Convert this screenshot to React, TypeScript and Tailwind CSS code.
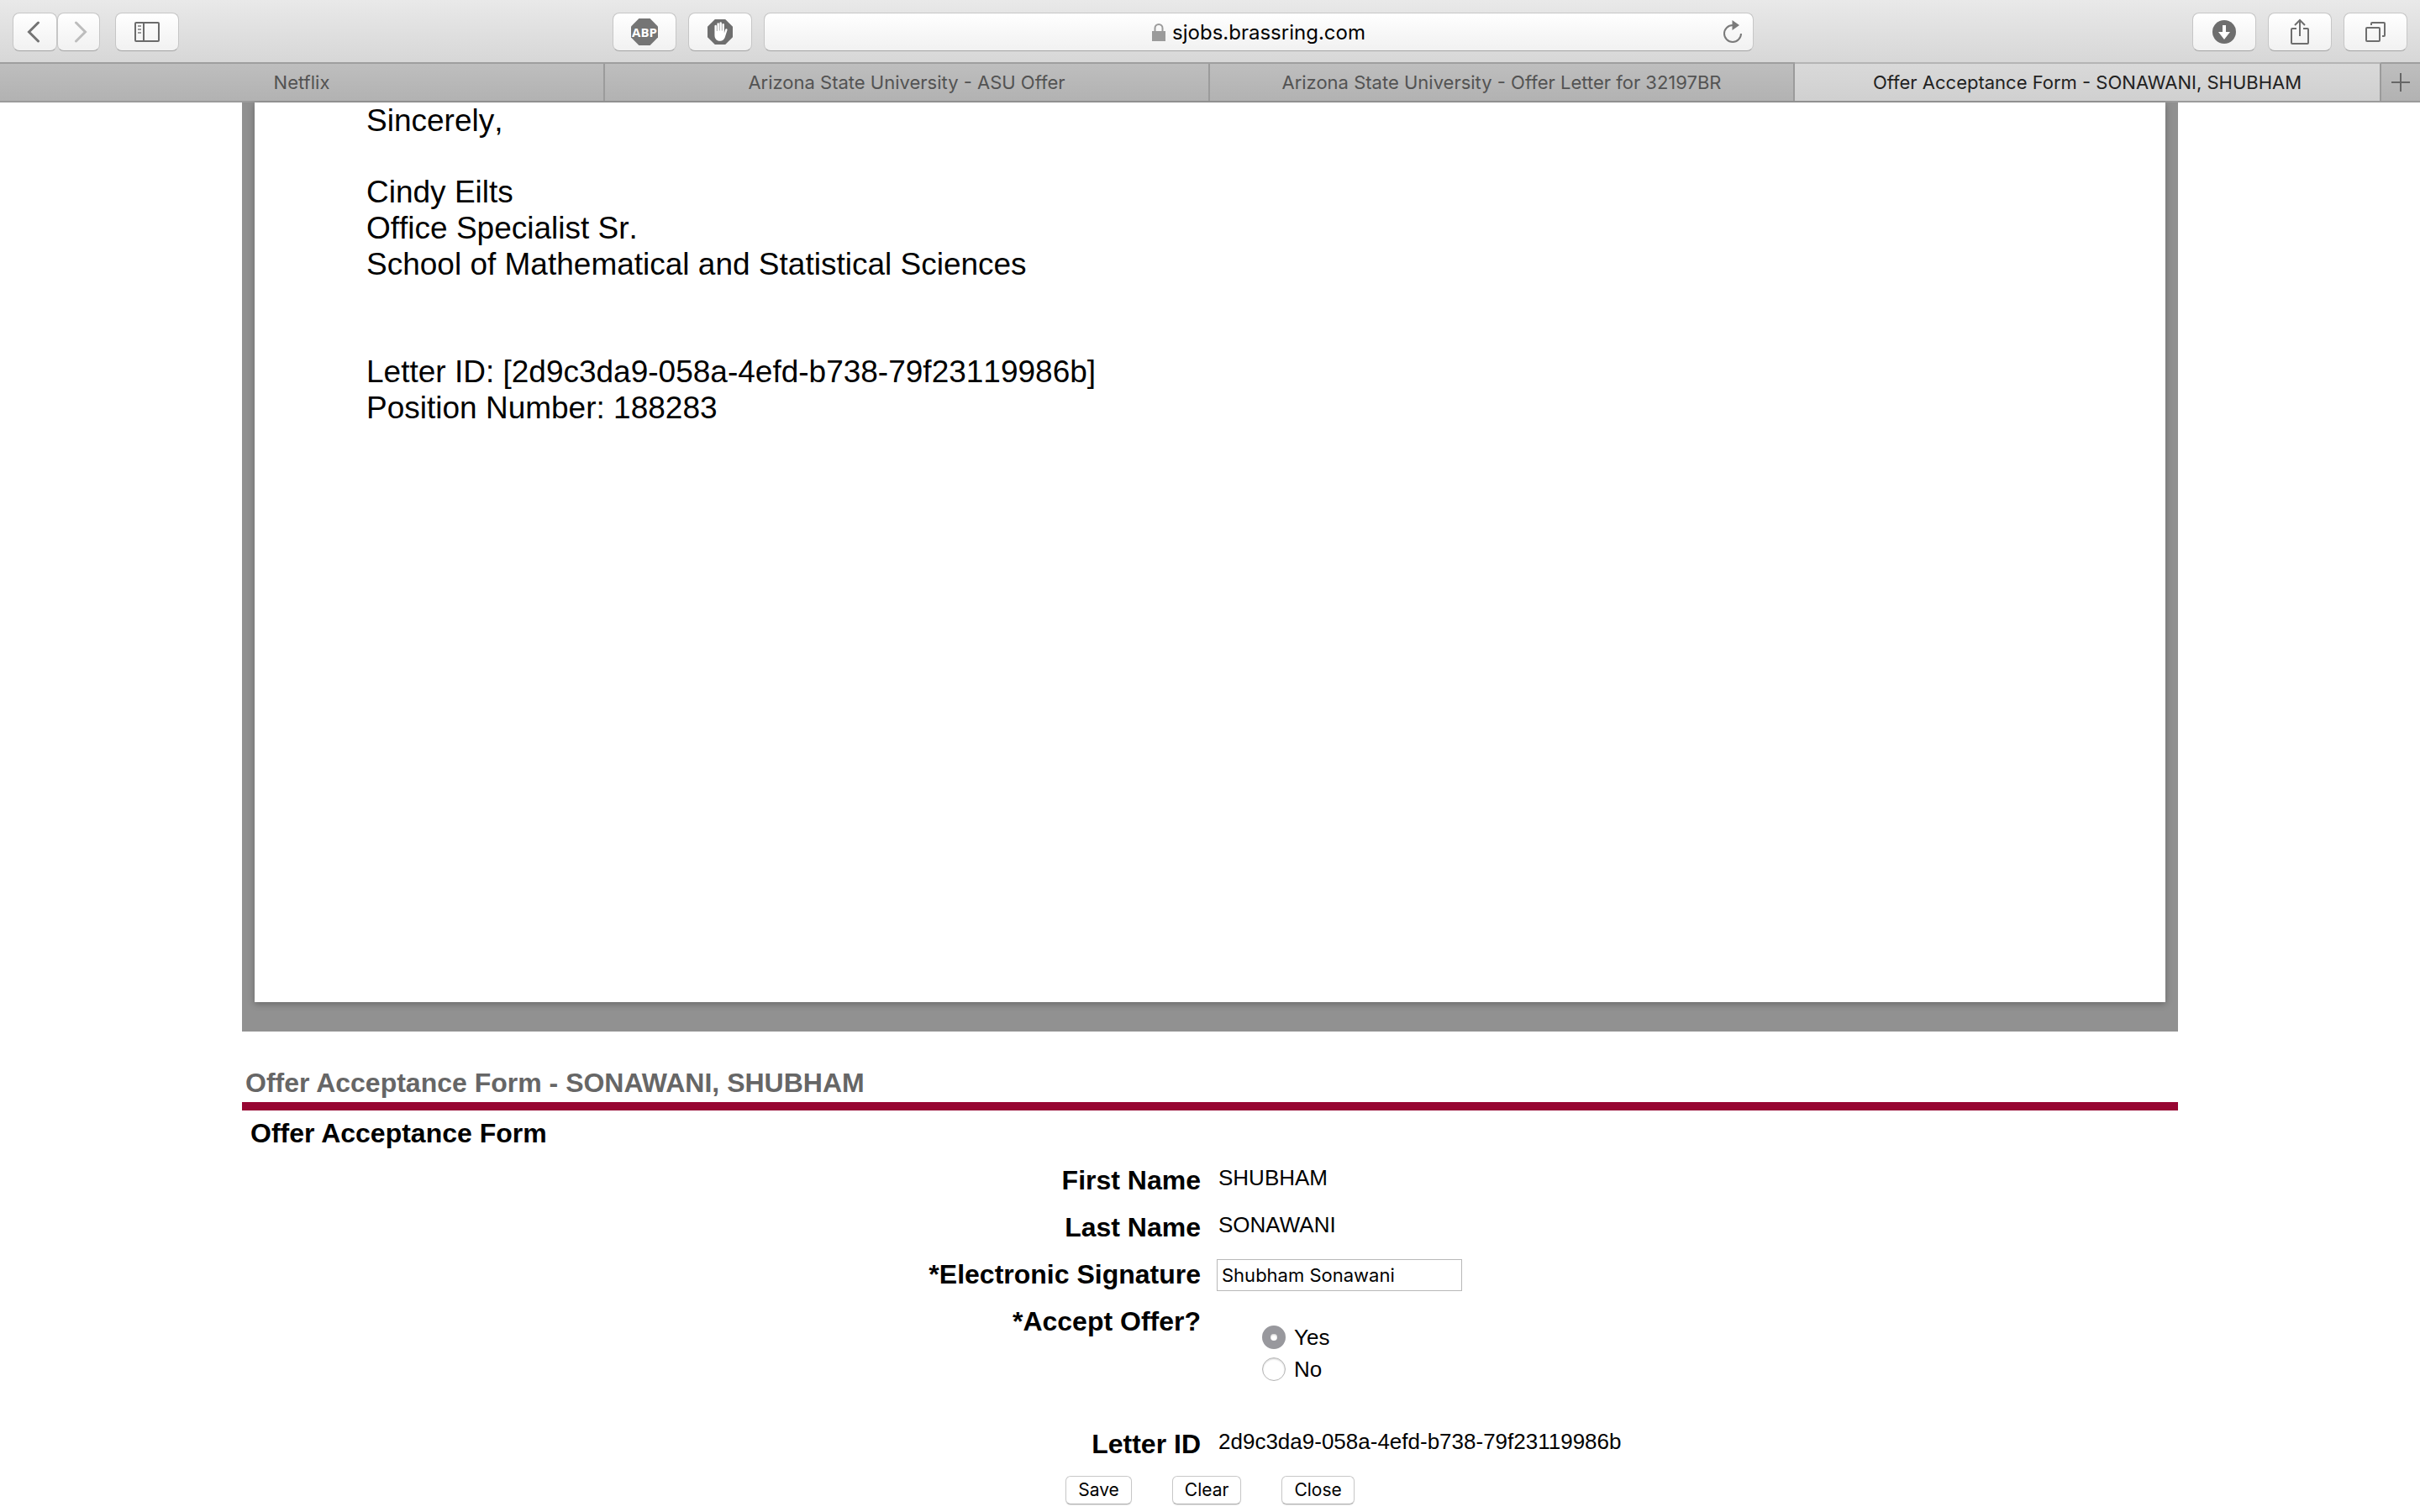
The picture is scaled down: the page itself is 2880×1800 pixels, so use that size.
import type { ReactNode } from "react";

const toolButton =
  "flex h-[46px] items-center justify-center rounded-lg border border-[#c6c6c6] border-b-[#a4a4a4] bg-linear-to-b from-white to-[#f1f1f1]";

function ToolButton({ label, children }: { label: string; children: ReactNode }) {
  return (
    <button type="button" aria-label={label} className={`${toolButton} w-[76px]`}>
      {children}
    </button>
  );
}

const octagon = "M9.4 0H22.6L32 9.4V22.6L22.6 32H9.4L0 22.6V9.4Z";

function Toolbar() {
  return (
    <header className="flex items-start justify-between border-b-2 border-[#9f9f9f] bg-linear-to-b from-[#e9e9e9] to-[#d7d7d7] px-[15px] pt-[15px] pb-[13px]">
      <div className="flex">
        <button type="button" aria-label="Back" className={`${toolButton} w-[53px] pr-1`}>
          <svg width="16" height="26" viewBox="0 0 16 26" fill="none" stroke="#737373" strokeWidth="3" strokeLinecap="round">
            <path d="M13.500 2L2.500 13L13.500 24" />
          </svg>
        </button>
        <button type="button" aria-label="Forward" className={`${toolButton} w-[51px] pl-1`}>
          <svg width="16" height="26" viewBox="0 0 16 26" fill="none" stroke="#bdbdbd" strokeWidth="3" strokeLinecap="round">
            <path d="M2.500 2L13.500 13L2.500 24" />
          </svg>
        </button>
        <div className="ml-[18px]">
          <ToolButton label="Show sidebar">
            <svg width="30" height="24" viewBox="0 0 30 24" fill="none" stroke="#6b6b6b" strokeWidth="2">
              <rect x="1" y="1" width="28" height="22" rx="1" />
              <path d="M11 1V23" />
              <path d="M4 5H8M4 9H8M4 13H8" stroke="#9a9a9a" />
            </svg>
          </ToolButton>
        </div>
      </div>

      <div className="flex w-[48%] gap-[14px] pr-2 pl-0.5">
        <ToolButton label="Adblock Plus">
          <svg width="32" height="32" viewBox="0 0 32 32">
            <path d={octagon} fill="#757575" />
            <text x="16" y="22" textAnchor="middle" fontSize="15" fontWeight="700" fill="#fff" fontFamily="Open Sans, sans-serif">
              ABP
            </text>
          </svg>
        </ToolButton>
        <ToolButton label="AdBlock">
          <svg width="30" height="30" viewBox="0 0 32 32">
            <path d={octagon} fill="#6e6e6e" />
            <path
              d="M9 8.500a1.300 1.300 0 0 1 2.600 0V15h.6V5.800a1.300 1.300 0 0 1 2.600 0V14.500h.6V4.800a1.300 1.300 0 0 1 2.600 0V14.500h.6V6.500a1.300 1.300 0 0 1 2.600 0V17.500l1.400-4.600a1.300 1.300 0 0 1 2.500.7L22.700 21C21.600 25.500 19 27.500 15.700 27.500C11.500 27.500 9 24.500 9 20Z"
              fill="#fff"
            />
          </svg>
        </ToolButton>
        <div className={`${toolButton} relative min-w-0 flex-1 gap-2`}>
          <svg width="16" height="21" viewBox="0 0 16 21">
            <path d="M0 9H16V21H0Z" fill="#9b9b9b" />
            <path d="M3.500 10V5.500a4.500 4.500 0 0 1 9 0V10" fill="none" stroke="#9b9b9b" strokeWidth="2" />
          </svg>
          <input
            aria-label="Address"
            defaultValue="sjobs.brassring.com"
            className="field-sizing-content bg-transparent pt-0.5 text-[24px] leading-[32px] text-black outline-none"
          />
          <button type="button" aria-label="Reload" className="absolute right-3 flex">
            <svg width="24" height="28" viewBox="0 0 24 28">
              <path d="M12 6A10 10 0 1 0 22 16" fill="none" stroke="#7a7a7a" strokeWidth="2" />
              <path d="M11.500 0L20 6L11.500 12Z" fill="#7a7a7a" />
            </svg>
          </button>
        </div>
      </div>

      <div className="flex gap-[14px]">
        <ToolButton label="Downloads">
          <svg width="28" height="28" viewBox="0 0 28 28">
            <circle cx="14" cy="14" r="14" fill="#6e6e6e" />
            <path d="M12 6H16V14H21L14 23L7 14H12Z" fill="#fff" />
          </svg>
        </ToolButton>
        <ToolButton label="Share">
          <svg width="24" height="32" viewBox="0 0 24 32" fill="none" stroke="#6e6e6e" strokeWidth="2">
            <path d="M8 12H3a1 1 0 0 0-1 1V29a1 1 0 0 0 1 1H21a1 1 0 0 0 1-1V13a1 1 0 0 0-1-1H16" />
            <path d="M12 21V2M6 8L12 2L18 8" />
          </svg>
        </ToolButton>
        <ToolButton label="Show all tabs">
          <svg width="24" height="24" viewBox="0 0 24 24" fill="none" stroke="#6e6e6e" strokeWidth="2">
            <rect x="1" y="7" width="16" height="16" rx="1" />
            <path d="M7 4V2a1 1 0 0 1 1-1H22a1 1 0 0 1 1 1V16a1 1 0 0 1-1 1H20" />
          </svg>
        </ToolButton>
      </div>
    </header>
  );
}

const tab = "min-w-0 truncate border-r-2 border-[#9b9b9b] px-4 text-[22px] leading-[44px] text-center";
const idleTab = "bg-linear-to-b from-[#bebebe] to-[#b2b2b2] text-[#535353]";

function Tabs() {
  return (
    <nav aria-label="Tabs" className="flex border-b-2 border-[#9b9b9b]">
      <a href="#netflix" className={`${tab} ${idleTab} flex-[686]`}>Netflix</a>
      <a href="#asu-offer" className={`${tab} ${idleTab} flex-[686]`}>Arizona State University - ASU Offer</a>
      <a href="#offer-letter" className={`${tab} ${idleTab} flex-[662]`}>Arizona State University - Offer Letter for 32197BR</a>
      <a
        href="#offer-form"
        aria-current="page"
        className={`${tab} -mt-0.5 flex-[664] border-t-2 border-t-[#b5b5b5] bg-linear-to-b from-[#d9d9d9] to-[#d0d0d0] text-[#222222]`}
      >
        Offer Acceptance Form - SONAWANI, SHUBHAM
      </a>
      <button type="button" aria-label="New tab" className={`${idleTab} flex w-[46px] items-center justify-center`}>
        <svg width="22" height="22" viewBox="0 0 22 22" stroke="#666" strokeWidth="2">
          <path d="M0 11H22M11 0V22" />
        </svg>
      </button>
    </nav>
  );
}

function Letter() {
  return (
    <article className="bg-[#919191] px-[15px] pb-[35px]">
      <div className="min-h-[1071px] bg-white px-[133px] text-[37px] leading-[43px] shadow-[0_2px_8px_rgba(0,0,0,0.3)] [font-kerning:none]">
        <p>Sincerely,</p>
        <p className="mt-[42px]">
          Cindy Eilts
          <br />
          Office Specialist Sr.
          <br />
          School of Mathematical and Statistical Sciences
        </p>
        <p className="mt-[85px]">
          Letter ID: [2d9c3da9-058a-4efd-b738-79f23119986b]
          <br />
          Position Number: 188283
        </p>
      </div>
    </article>
  );
}

const row = "grid grid-cols-2 items-start pt-[9px]";
const rowLabel = "pr-[11px] text-right text-[32px] leading-[36px] font-bold";
const rowValue = "pl-[10px] text-[26px] leading-[30px]";
const radio =
  "size-7 appearance-none rounded-full border border-[#b5b5b5] bg-white shadow-[inset_0_1px_2px_rgba(0,0,0,0.2)] checked:border-[10px] checked:border-[#98989d]";
const formButton =
  "h-[34px] rounded-md border border-[#c8c8c8] border-b-[#b0b0b0] bg-white px-[14px] font-[Inter,sans-serif] text-[21px] leading-[32px] shadow-[0_1px_1px_rgba(0,0,0,0.12)]";

function OfferForm() {
  return (
    <form onSubmit={(e) => e.preventDefault()}>
      <h1 className="border-b-[10px] border-[#970632] pt-[43px] pb-[5px] pl-1 text-[32px] leading-[36px] font-bold text-[#666666]">
        Offer Acceptance Form - SONAWANI, SHUBHAM
      </h1>
      <h2 className="pt-[9px] pb-[11px] pl-[10px] text-[32px] leading-[36px] font-bold">Offer Acceptance Form</h2>
      <div className={`${row} h-14`}>
        <span className={rowLabel}>First Name</span>
        <span className={rowValue}>SHUBHAM</span>
      </div>
      <div className={`${row} h-14`}>
        <span className={rowLabel}>Last Name</span>
        <span className={rowValue}>SONAWANI</span>
      </div>
      <div className={`${row} h-14`}>
        <label htmlFor="signature" className={rowLabel}>*Electronic Signature</label>
        <div className="pl-2">
          <input
            id="signature"
            defaultValue="Shubham Sonawani"
            className="h-[38px] w-[292px] border border-[#b8b8b8] bg-white px-[5px] font-[Inter,sans-serif] text-[22px]"
          />
        </div>
      </div>
      <fieldset className={`${row} h-[146px]`}>
        <span id="accept-label" className={rowLabel}>*Accept Offer?</span>
        <div role="radiogroup" aria-labelledby="accept-label" className="flex flex-col gap-2 pt-[22px] pl-[62px] text-[26px] leading-[30px]">
          <label className="flex items-center gap-[10px]">
            <input type="radio" name="accept" defaultChecked className={radio} />
            Yes
          </label>
          <label className="flex items-center gap-[10px]">
            <input type="radio" name="accept" className={radio} />
            No
          </label>
        </div>
      </fieldset>
      <div className={`${row} h-14`}>
        <span className={rowLabel}>Letter ID</span>
        <span className={rowValue}>2d9c3da9-058a-4efd-b738-79f23119986b</span>
      </div>
      <div className="flex justify-center gap-12 pt-[9px] pb-[9px]">
        <button type="submit" className={formButton}>Save</button>
        <button type="reset" className={formButton}>Clear</button>
        <button type="button" className={formButton}>Close</button>
      </div>
    </form>
  );
}

export default function App() {
  return (
    <div className="min-h-screen bg-white text-black">
      <div className="font-[Inter,sans-serif]">
        <Toolbar />
        <Tabs />
      </div>
      <main className="mx-auto w-4/5 font-['Liberation_Sans',Arial,sans-serif]">
        <Letter />
        <OfferForm />
      </main>
    </div>
  );
}
